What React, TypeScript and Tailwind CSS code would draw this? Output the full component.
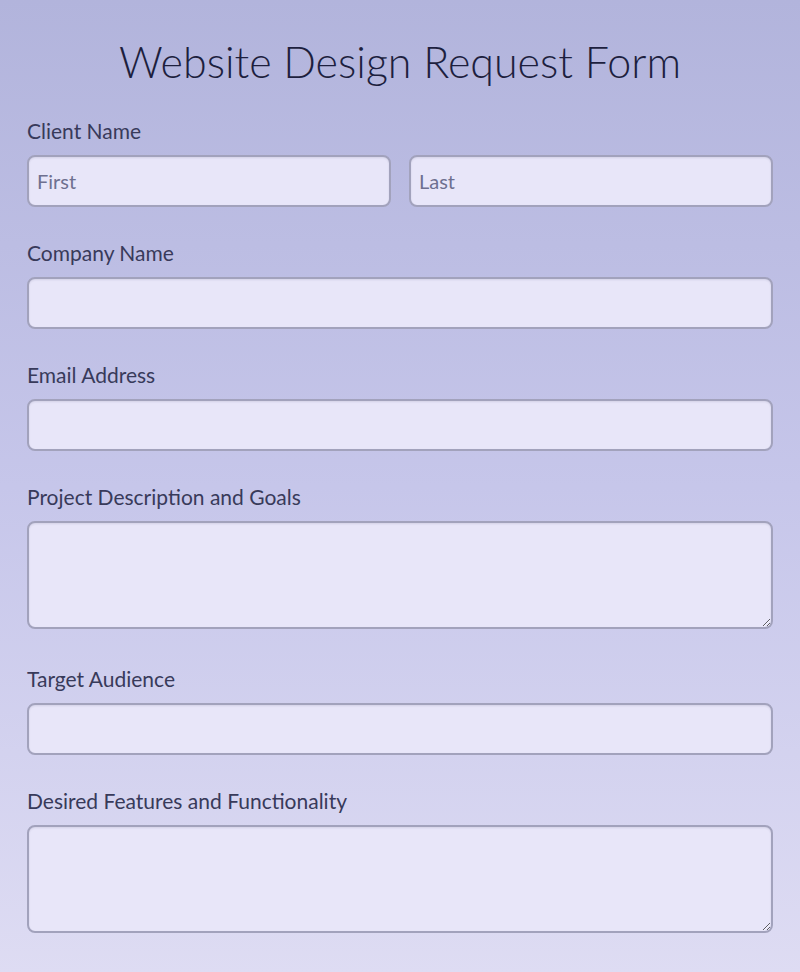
const fieldClass =
  "block w-full h-[52px] rounded-lg border-2 border-[#a2a2bc] bg-[#e8e6f9] px-2 text-[20px] text-[#3b3d5c] placeholder:text-[#6e7090] shadow-[inset_0_1px_2px_rgba(60,60,100,0.12)] outline-none";

const areaClass =
  "block w-full h-[108px] rounded-lg border-2 border-[#a2a2bc] bg-[#e8e6f9] px-2 py-1 text-[20px] text-[#3b3d5c] shadow-[inset_0_1px_2px_rgba(60,60,100,0.12)] outline-none resize-y";

function Label({ children }: { children: React.ReactNode }) {
  return (
    <label className="block text-[21px] leading-6 font-normal text-[#383a5a] mb-3">
      {children}
    </label>
  );
}

export default function App() {
  return (
    <div
      className="min-h-[972px] w-full bg-gradient-to-b from-[#b2b4dc] via-[#c6c6ea] to-[#dedcf3] px-[27px] pt-[34px] pb-10"
      style={{ fontFamily: "Lato, 'Noto Sans', sans-serif" }}
    >
      <h1 className="text-center text-[43px] leading-[56px] font-light text-[#1d1f3e] mb-[29px]">
        Website Design Request Form
      </h1>

      <form className="flex flex-col gap-[34px]">
        <div>
          <Label>Client Name</Label>
          <div className="grid grid-cols-2 gap-[18px]">
            <input className={fieldClass} placeholder="First" />
            <input className={fieldClass} placeholder="Last" />
          </div>
        </div>

        <div>
          <Label>Company Name</Label>
          <input className={fieldClass} />
        </div>

        <div>
          <Label>Email Address</Label>
          <input className={fieldClass} type="email" />
        </div>

        <div>
          <Label>Project Description and Goals</Label>
          <textarea className={areaClass} />
        </div>

        <div className="pt-[4px]">
          <Label>Target Audience</Label>
          <input className={fieldClass} />
        </div>

        <div>
          <Label>Desired Features and Functionality</Label>
          <textarea className={areaClass} />
        </div>
      </form>
    </div>
  );
}
